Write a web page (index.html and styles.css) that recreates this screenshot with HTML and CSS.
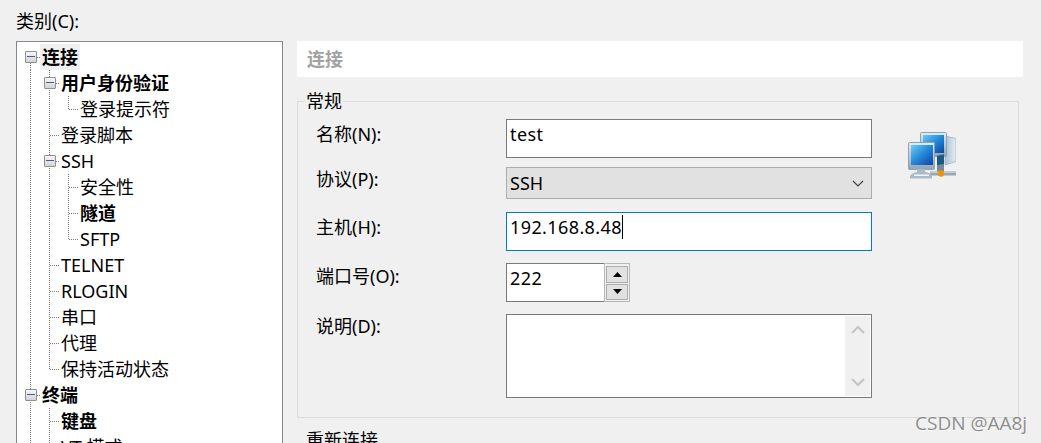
FILE: index.html
```html
<!DOCTYPE html>
<html lang="zh-CN">
<head>
<meta charset="utf-8">
<title>连接</title>
<link rel="stylesheet" href="styles.css">
</head>
<body>
<div class="page">
  <aside class="side">
    <div class="cat-label">类别(C):</div>
    <div class="tree">
      <div class="row"><div class="g top"><span class="box"></span></div><span class="t b sel">连接</span></div>
      <div class="row"><div class="g v"></div><div class="g v h"><span class="box"></span></div><span class="t b">用户身份验证</span></div>
      <div class="row"><div class="g v"></div><div class="g v"></div><div class="g e"></div><span class="t">登录提示符</span></div>
      <div class="row"><div class="g v"></div><div class="g v h"></div><span class="t">登录脚本</span></div>
      <div class="row"><div class="g v"></div><div class="g v h"><span class="box"></span></div><span class="t">SSH</span></div>
      <div class="row"><div class="g v"></div><div class="g v"></div><div class="g v h"></div><span class="t">安全性</span></div>
      <div class="row"><div class="g v"></div><div class="g v"></div><div class="g v h"></div><span class="t b">隧道</span></div>
      <div class="row"><div class="g v"></div><div class="g v"></div><div class="g e"></div><span class="t">SFTP</span></div>
      <div class="row"><div class="g v"></div><div class="g v h"></div><span class="t">TELNET</span></div>
      <div class="row"><div class="g v"></div><div class="g v h"></div><span class="t">RLOGIN</span></div>
      <div class="row"><div class="g v"></div><div class="g v h"></div><span class="t">串口</span></div>
      <div class="row"><div class="g v"></div><div class="g v h"></div><span class="t">代理</span></div>
      <div class="row"><div class="g v"></div><div class="g e"></div><span class="t">保持活动状态</span></div>
      <div class="row"><div class="g v h"><span class="box"></span></div><span class="t b">终端</span></div>
      <div class="row"><div class="g v"></div><div class="g v h"></div><span class="t b">键盘</span></div>
      <div class="row"><div class="g v"></div><div class="g v h"></div><span class="t">VT 模式</span></div>
    </div>
  </aside>
  <main class="content">
    <div class="banner">连接</div>
    <fieldset class="group">
      <legend class="legend">常规</legend>
      <div class="form">
        <div class="fields">
          <div class="field f-name">
            <label class="lbl lbl-low">名称(N):</label>
            <div class="input">test</div>
          </div>
          <div class="field f-proto">
            <label class="lbl">协议(P):</label>
            <div class="combo"><span>SSH</span>
              <svg class="chev" width="12" height="7" viewBox="0 0 12 7"><path d="M1 1l5 5 5-5" fill="none" stroke="#404040" stroke-width="1.1"/></svg>
            </div>
          </div>
          <div class="field f-host">
            <label class="lbl lbl-low">主机(H):</label>
            <div class="input focus"><span>192.168.8.48</span><i class="caret"></i></div>
          </div>
          <div class="field f-port">
            <label class="lbl lbl-mid">端口号(O):</label>
            <div class="input port">222</div>
            <div class="spin">
              <div class="spin-btn"><svg width="9" height="5" viewBox="0 0 9 5"><path d="M4.5 0L9 5H0z" fill="#000"/></svg></div>
              <div class="spin-btn"><svg width="9" height="5" viewBox="0 0 9 5"><path d="M0 0h9L4.5 5z" fill="#000"/></svg></div>
            </div>
          </div>
          <div class="field">
            <label class="lbl">说明(D):</label>
            <div class="memo">
              <div class="scroll">
                <svg width="14" height="9" viewBox="0 0 14 9"><path d="M1 8l6-6 6 6" fill="none" stroke="#c4c4c4" stroke-width="2.2"/></svg>
                <svg width="14" height="9" viewBox="0 0 14 9"><path d="M1 1l6 6 6-6" fill="none" stroke="#c4c4c4" stroke-width="2.2"/></svg>
              </div>
            </div>
          </div>
        </div>
        <svg class="net-icon" width="48" height="48" viewBox="0 0 48 48">
          <defs>
            <linearGradient id="scr" x1="0" y1="0" x2="1" y2="1">
              <stop offset="0" stop-color="#6ccdf0"/>
              <stop offset=".5" stop-color="#2488d8"/>
              <stop offset="1" stop-color="#0c45a0"/>
            </linearGradient>
            <linearGradient id="case" x1="0" y1="0" x2="0" y2="1">
              <stop offset="0" stop-color="#e4ecf3"/>
              <stop offset="1" stop-color="#8ea6ba"/>
            </linearGradient>
            <linearGradient id="tower" x1="0" y1="0" x2="1" y2="0">
              <stop offset="0" stop-color="#a9c0d4"/>
              <stop offset="1" stop-color="#e6edf3"/>
            </linearGradient>
            <filter id="soft"><feGaussianBlur stdDeviation=".35"/></filter>
          </defs>
          <g filter="url(#soft)">
            <path d="M37 4l11 2.500v23L37 33z" fill="url(#tower)" stroke="#9fb2c3" stroke-width=".8"/>
            <rect x="12.500" y=".5" width="26" height="24" rx="1" fill="url(#case)" stroke="#8ea2b4"/>
            <rect x="15" y="3" width="21" height="18" fill="url(#scr)"/>
            <path d="M29 23l7-1v18h-7z" fill="#6f8aa0"/>
            <path d="M29 24l7-1.500V32l-7 1z" fill="#1f5a86"/>
            <rect x="22" y="39.500" width="26" height="4" fill="#9aa6b0"/>
            <rect x="22" y="39.500" width="26" height="1.500" fill="#c4ccd3"/>
            <rect x=".5" y="10.500" width="26" height="27" rx="1" fill="url(#case)" stroke="#8ea2b4"/>
            <rect x="3" y="13" width="22" height="20" fill="url(#scr)"/>
            <path d="M9 37h8v3c4 .5 6 2 7 4v2.500H2V44c1-2 4-3.500 7-4z" fill="#a9bac8"/>
            <path d="M6 42.500h15v1.500H6z" fill="#f4f7fa"/>
            <circle cx="33" cy="41.500" r="3.200" fill="#f0920a"/>
          </g>
        </svg>
      </div>
    </fieldset>
    <div class="next">重新连接</div>
  </main>
</div>
<div class="mark">CSDN @AA8j</div>
</body>
</html>
```
FILE: styles.css
```css
* { box-sizing: border-box; }
html, body { margin: 0; height: 443px; overflow: hidden; background: #f0f0f0; }
body {
  font-family: "Noto Sans", "Noto Sans CJK SC", sans-serif;
  font-size: 18px;
  color: #000;
}
.page { display: flex; gap: 14px; height: 443px; padding-left: 16px; overflow: hidden; }

/* left column */
.side { width: 267px; flex: none; display: flex; flex-direction: column; }
.cat-label { height: 41px; padding-top: 8px; line-height: 26px; }
.tree {
  flex: 1;
  background: #fff;
  border: 1px solid #828790;
  border-bottom: 0;
  padding: 2px 0 0 4px;
  overflow: hidden;
}
.row { display: flex; height: 26px; line-height: 26px; white-space: nowrap; }
.t { padding: 0 2px; margin-left: 0; height: 26px; }
.b { font-weight: 700; }
.sel { background: #f0f0f0; width: 40px; }
.g {
  width: 19px; height: 26px; flex: none;
  --dots-v: repeating-linear-gradient(to bottom, #7a7a7a 0 1px, transparent 1px 2px);
  --dots-h: repeating-linear-gradient(to right, #7a7a7a 0 1px, transparent 1px 2px);
}
.v { background: var(--dots-v) 9px 0 / 1px 100% no-repeat; }
.v.h {
  background:
    var(--dots-h) 10px 13px / 9px 1px no-repeat,
    var(--dots-v) 9px 0 / 1px 100% no-repeat;
}
.e {
  background:
    var(--dots-h) 10px 13px / 9px 1px no-repeat,
    var(--dots-v) 9px 0 / 1px 14px no-repeat;
}
.top {
  background:
    var(--dots-h) 10px 13px / 9px 1px no-repeat,
    var(--dots-v) 9px 13px / 1px 13px no-repeat;
}
.box {
  display: block;
  width: 12px; height: 12px;
  margin: 7px 0 0 4px;
  border: 1px solid #8e8f8f;
  border-radius: 1px;
  background:
    linear-gradient(#3f5d9e, #3f5d9e) 1px 4px / 8px 1px no-repeat,
    linear-gradient(#f6f6f6, #d3d3d3);
}

/* right column */
.content { width: 726px; flex: none; padding-top: 41px; }
.banner {
  height: 36px; background: #fff; padding-left: 10px;
  line-height: 36px; font-weight: 700; color: #a2a2a2;
}
.group {
  width: 722px; height: 329px;
  margin: 12px 0 0;
  padding: 0 0 0 18px;
  border: 1px solid #dcdcdc;
  min-width: 0;
}
.legend { margin-left: -11px; padding: 0 1px; line-height: 24px; height: 24px; }
.form { display: flex; align-items: flex-start; }
.fields { display: flex; flex-direction: column; width: 556px; padding-top: 6px; gap: 12px; }
.field { display: flex; align-items: flex-start; }
.f-name { margin-bottom: -3px; }
.f-proto { margin-bottom: 1px; }
.lbl { width: 190px; flex: none; line-height: 24px; height: 26px; }
.lbl-low { margin-top: 3px; }
.lbl-mid { margin-top: 1px; }
.input {
  width: 366px; height: 39px;
  background: #fff;
  border: 1px solid #7a7a7a;
  padding: 0 3px;
  line-height: 28px;
  letter-spacing: .4px;
  display: flex;
  align-items: flex-start;
}
.focus { border-color: #0078d7; }
.caret { display: block; width: 1px; height: 24px; margin-top: 2px; background: #000; }
.port { width: 98px; border-right: 0; }
.combo {
  width: 366px; height: 32px;
  background: #e1e1e1;
  border: 1px solid #adadad;
  padding: 0 7px 0 3px;
  line-height: 30px;
  display: flex; align-items: center; justify-content: space-between;
}
.spin {
  width: 26px; height: 39px;
  border: 1px solid #b8b8b8;
  padding: 2px 1px 1px;
  display: flex; flex-direction: column; gap: 1px;
}
.spin-btn {
  flex: 1;
  background: #e1e1e1;
  border: 1px solid #adadad;
  display: flex; align-items: center; justify-content: center;
}
.memo {
  width: 366px; height: 84px;
  background: #fff;
  border: 1px solid #7a7a7a;
  padding: 1px;
  display: flex; justify-content: flex-end;
}
.scroll {
  width: 25px; height: 100%;
  background: #f0f0f0;
  display: flex; flex-direction: column; align-items: center; justify-content: space-between;
  padding: 9px 0 9px 1px;
}
.net-icon { margin: 19px 0 0 36px; flex: none; }
.next { padding-left: 9px; margin-top: 9px; line-height: 26px; }

/* overlay */
.mark {
  position: absolute; left: 915px; top: 411px;
  font-family: "Open Sans", sans-serif;
  font-size: 19px; line-height: 24px;
  color: rgba(105,105,105,.75);
  text-shadow: 0 1px 1px rgba(255,255,255,.6);
}
```
